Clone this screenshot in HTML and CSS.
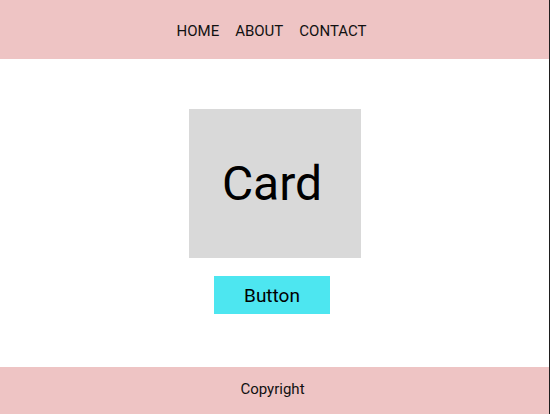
FILE: index.html
```html
<!DOCTYPE html>
<html>
<head>
<meta charset="utf-8">
<link rel="stylesheet" href="styles.css">
</head>
<body>
<div class="page">
  <header class="header">
    <nav class="nav">
      <a class="nav-link">HOME</a>
      <a class="nav-link">ABOUT</a>
      <a class="nav-link">CONTACT</a>
    </nav>
  </header>
  <main class="main">
    <div class="card">Card</div>
    <button class="btn">Button</button>
  </main>
  <footer class="footer">Copyright</footer>
</div>
</body>
</html>
```
FILE: styles.css
```css
html, body {
  margin: 0;
  padding: 0;
  height: 100%;
}
body {
  font-family: Roboto, "Liberation Sans", sans-serif;
  color: #000;
  background: #fff;
}
.page {
  height: 414px;
  display: flex;
  flex-direction: column;
  border-right: 1px solid #1e1e1e;
}
.header {
  height: 59px;
  box-sizing: border-box;
  padding-top: 3px;
  padding-right: 6px;
  background: #eec4c4;
  display: flex;
  align-items: center;
  justify-content: center;
}
.nav {
  display: flex;
  gap: 16px;
  font-size: 15px;
}
.nav-link {
  color: #111;
}
.main {
  flex: 1;
  display: flex;
  flex-direction: column;
  align-items: center;
  padding-top: 50px;
}
.card {
  width: 172px;
  height: 149px;
  box-sizing: border-box;
  padding-right: 5px;
  background: #d9d9d9;
  display: flex;
  align-items: center;
  justify-content: center;
  font-size: 48px;
}
.btn {
  margin-top: 18px;
  margin-right: 5px;
  width: 116px;
  height: 38px;
  border: none;
  background: #4de6f0;
  font-family: inherit;
  font-size: 19px;
  color: #000;
  padding: 0;
}
.footer {
  height: 47px;
  box-sizing: border-box;
  padding-bottom: 4px;
  padding-right: 4px;
  background: #eec4c4;
  display: flex;
  align-items: center;
  justify-content: center;
  font-size: 15px;
  color: #111;
}
```
